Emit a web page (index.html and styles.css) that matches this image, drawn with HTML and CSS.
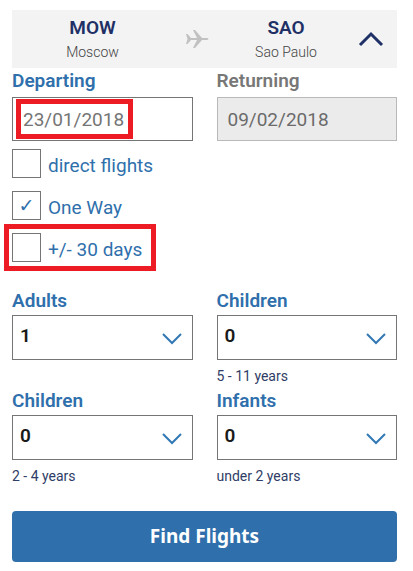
FILE: index.html
```html
<!DOCTYPE html>
<html lang="en">
<head>
<meta charset="UTF-8">
<meta name="viewport" content="width=device-width, initial-scale=1.0">
<title>Find Flights</title>
<link rel="stylesheet" href="styles.css">
</head>
<body>
<form class="search">
  <div class="route">
    <div class="airport">
      <div class="code">MOW</div>
      <div class="city">Moscow</div>
    </div>
    <svg class="plane" viewBox="0 0 24 20" width="24" height="20" aria-hidden="true">
      <path d="M1 5h1.500l3.500 4h6L8 1h2l7 8h4.500q2 .2 2 1t-2 1H17l-7 8H8l4-8H6l-3.500 4H1l1.500-5z"/>
    </svg>
    <div class="airport">
      <div class="code">SAO</div>
      <div class="city">Sao Paulo</div>
    </div>
    <button type="button" class="toggle" aria-label="Collapse">
      <svg viewBox="0 0 26 16" width="26" height="16"><path d="M2 14L13 3l11 11"/></svg>
    </button>
  </div>

  <div class="dates">
    <div class="field">
      <label for="departing">Departing</label>
      <div class="date-box">
        <input type="text" id="departing" value="23/01/2018">
        <span class="mark mark-date"></span>
      </div>
    </div>
    <div class="field returning">
      <label for="returning">Returning</label>
      <div class="date-box">
        <input type="text" id="returning" value="09/02/2018" disabled>
      </div>
    </div>
  </div>

  <div class="options">
    <label class="option"><input type="checkbox"><span class="text">direct flights</span></label>
    <label class="option"><input type="checkbox" checked><span class="text">One Way</span></label>
    <label class="option"><input type="checkbox"><span class="text">+/- 30 days</span><span class="mark mark-days"></span></label>
  </div>

  <div class="passengers">
    <div class="field">
      <label for="adults">Adults</label>
      <div class="select-box">
        <select id="adults"><option>0</option><option selected>1</option><option>2</option></select>
        <svg viewBox="0 0 20 12" width="20" height="12" aria-hidden="true"><path d="M1 1l9 9 9-9"/></svg>
      </div>
    </div>
    <div class="field">
      <label for="children">Children</label>
      <div class="select-box">
        <select id="children"><option>0</option><option>1</option><option>2</option></select>
        <svg viewBox="0 0 20 12" width="20" height="12" aria-hidden="true"><path d="M1 1l9 9 9-9"/></svg>
      </div>
      <div class="hint">5 - 11 years</div>
    </div>
    <div class="field">
      <label for="toddlers">Children</label>
      <div class="select-box">
        <select id="toddlers"><option>0</option><option>1</option><option>2</option></select>
        <svg viewBox="0 0 20 12" width="20" height="12" aria-hidden="true"><path d="M1 1l9 9 9-9"/></svg>
      </div>
      <div class="hint">2 - 4 years</div>
    </div>
    <div class="field">
      <label for="infants">Infants</label>
      <div class="select-box">
        <select id="infants"><option>0</option><option>1</option><option>2</option></select>
        <svg viewBox="0 0 20 12" width="20" height="12" aria-hidden="true"><path d="M1 1l9 9 9-9"/></svg>
      </div>
      <div class="hint">under 2 years</div>
    </div>
  </div>

  <button type="submit" class="find">Find Flights</button>
</form>
</body>
</html>
```
FILE: styles.css
```css
* {
  box-sizing: border-box;
}
body {
  margin: 0;
  padding: 10px 16px 8px 12px;
  background-color: #fff;
  font-family: Roboto, sans-serif;
  color: #2f70ac;
}
input, select, button {
  font-family: inherit;
  margin: 0;
}
.route {
  display: grid;
  grid-template-columns: 1fr 48px 130px 46px;
  align-items: center;
  height: 58px;
  background-color: #f3f3f3;
  text-align: center;
}
.code {
  font-size: 19px;
  line-height: 24px;
  font-weight: 600;
  color: #1f3066;
}
.city {
  padding-top: 2px;
  font-size: 14px;
  line-height: 20px;
  font-weight: 300;
  color: #444;
}
.plane {
  justify-self: center;
  fill: #c1c1c1;
}
.toggle {
  display: flex;
  justify-content: center;
  padding: 0 6px 0 0;
  border: 0;
  background: none;
}
.toggle path {
  fill: none;
  stroke: #1f3066;
  stroke-width: 3;
}
.dates, .passengers {
  display: grid;
  grid-template-columns: 1fr 1fr;
  column-gap: 24px;
}
.field > label {
  display: block;
  padding-bottom: 2px;
  font-size: 19px;
  line-height: 25px;
  font-weight: 600;
}
.dates .field > label {
  padding-bottom: 4px;
}
.returning label {
  color: #777;
}
.date-box, .select-box, .option {
  position: relative;
}
.date-box input {
  display: block;
  width: 100%;
  height: 44px;
  padding: 0 10px;
  border: 1px solid #757575;
  border-radius: 0;
  background-color: #fff;
  font-size: 19px;
  color: #757575;
}
.date-box input:disabled {
  border-color: #b9b9b9;
  background-color: #ebebeb;
  color: #6b6b6b;
}
.mark {
  position: absolute;
  border: 5px solid #ed1c24;
  pointer-events: none;
}
.mark-date {
  top: 2px;
  left: 4px;
  width: 117px;
  height: 40px;
}
.mark-days {
  top: -9px;
  left: -8px;
  width: 152px;
  height: 47px;
}
.options {
  display: flex;
  flex-direction: column;
  align-items: flex-start;
  gap: 13px;
  padding: 8px 0 26px;
}
.option {
  display: flex;
  gap: 7px;
  height: 29px;
  font-size: 19px;
  line-height: 29px;
}
.option .text {
  padding-top: 2px;
}
.option input {
  appearance: none;
  display: grid;
  place-items: center;
  width: 29px;
  height: 29px;
  border: 1px solid #757575;
  background-color: #fff;
}
.option input:checked::before {
  content: "✓";
  font: 19px/25px "DejaVu Sans", sans-serif;
  color: #2f70ac;
}
.passengers {
  row-gap: 1px;
}
.select-box select {
  appearance: none;
  display: block;
  width: 100%;
  height: 45px;
  padding: 0 7px 4px;
  border: 1px solid #757575;
  border-radius: 0;
  background-color: #fff;
  font-size: 19px;
  font-weight: 600;
  color: #1a1a1a;
}
.select-box svg {
  position: absolute;
  top: 18px;
  right: 11px;
  fill: none;
  stroke: #3178b4;
  stroke-width: 2;
  pointer-events: none;
}
.hint {
  padding-top: 6px;
  font-size: 14px;
  line-height: 21px;
  color: #2f3d66;
}
.find {
  display: block;
  width: 100%;
  height: 51px;
  margin-top: 24px;
  padding: 0 0 2px;
  border: 0;
  border-radius: 4px;
  background-color: #2f70ac;
  font-family: "Noto Sans", sans-serif;
  font-size: 19px;
  font-weight: 700;
  color: #fff;
}
```
